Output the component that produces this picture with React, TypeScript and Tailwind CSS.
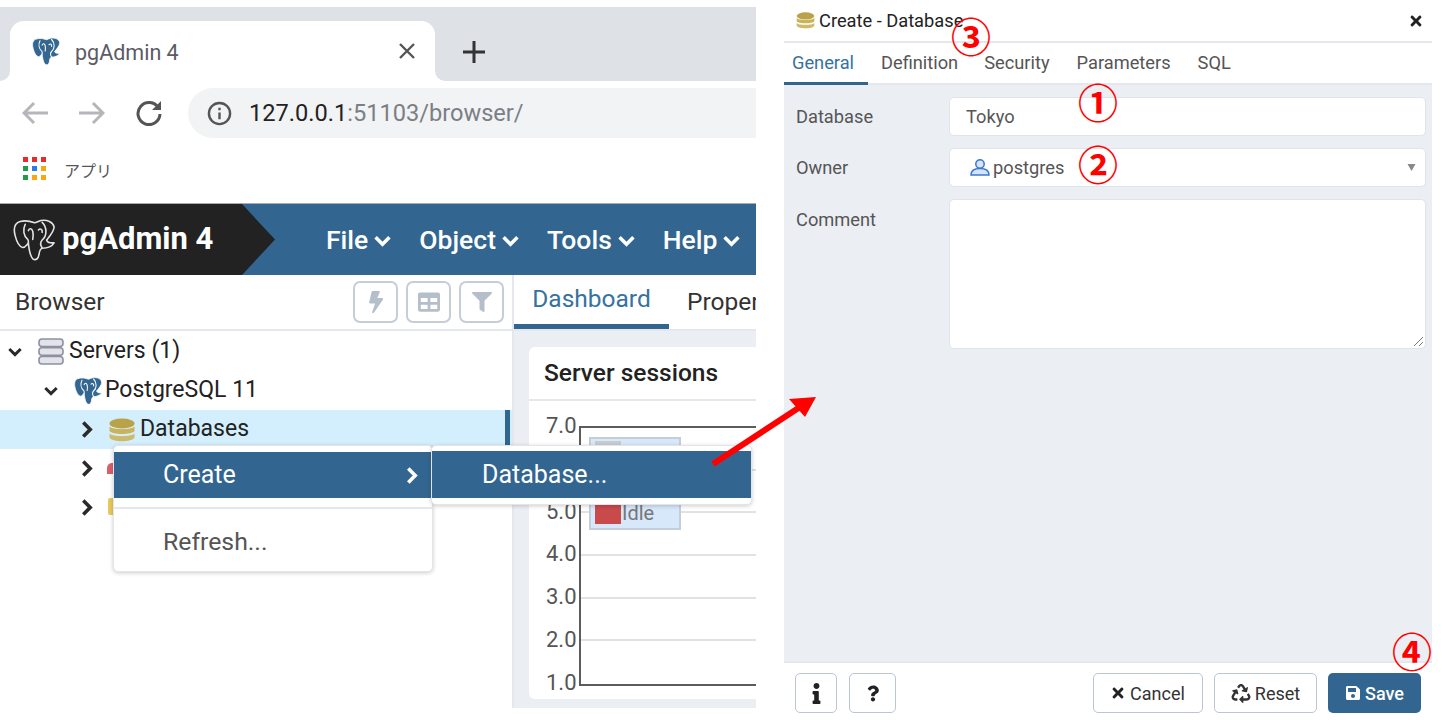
import React from "react";
import { FaBolt, FaTable, FaFilter, FaInfo, FaQuestion, FaTimes, FaRecycle, FaSave } from "react-icons/fa";

const Elephant = ({ className, outline }: { className: string; outline?: boolean }) => (
  <svg viewBox="16 24 140 136" className={className} fill="none" strokeLinejoin="round" strokeLinecap="round">
    <path
      d="M42 33C24 38 20 55 26 78C31 98 40 113 50 116C58 116 62 108 68 102C70 120 72 140 82 152C92 158 100 152 102 138C103 128 104 122 112 118C125 118 142 114 150 101C138 102 128 100 126 92C136 80 150 65 150 50C146 34 128 27 108 30C100 32 94 36 88 37C74 32 58 29 42 33Z"
      fill={outline ? "none" : "#336791"}
      stroke={outline ? "#e4e4e4" : "#ffffff"}
      strokeWidth={outline ? 5 : 3.500}
    />
    <path
      d="M58 42C50 58 52 78 66 90C70 96 68 100 68 102M112 36C128 52 128 78 112 92C106 98 106 108 112 118M68 62C72 54 78 54 82 64C84 72 84 80 82 90M100 60C106 54 114 58 112 68"
      stroke={outline ? "#e4e4e4" : "#ffffff"}
      strokeWidth={outline ? 5 : 5}
    />
  </svg>
);

const DbStack = ({ className }: { className: string }) => (
  <svg viewBox="0 0 26 24" className={className}>
    <ellipse cx="13" cy="5.500" rx="12.500" ry="5" fill="#b9a24a" />
    <path d="M.5 8.500C3 12 23 12 25.500 8.500V13C23 17 3 17 .5 13Z" fill="#c9b45c" />
    <path d="M.5 15.500C3 19 23 19 25.500 15.500V19.500C23 24.500 3 24.500 .5 19.500Z" fill="#cdbb6a" />
  </svg>
);

const Servers = () => (
  <svg viewBox="0 0 26 27" className="h-[27px] w-[26px]" fill="#e3e3ea" stroke="#8f8fa3" strokeWidth="1.600">
    <rect x="1" y="1" width="24" height="7.500" rx="3" />
    <rect x="1" y="9.800" width="24" height="7.500" rx="3" />
    <rect x="1" y="18.500" width="24" height="7.500" rx="3" />
  </svg>
);

const ChevDown = ({ className }: { className: string }) => (
  <svg viewBox="0 0 16 11" className={className} fill="none" stroke="currentColor" strokeWidth="3.400">
    <path d="M1.500 2L8 8.500L14.500 2" />
  </svg>
);

const ChevRight = ({ className }: { className: string }) => (
  <svg viewBox="0 0 11 16" className={className} fill="none" stroke="currentColor" strokeWidth="3.400">
    <path d="M2 1.500L8.500 8L2 14.500" />
  </svg>
);

const Circled = ({ children, className }: { children: string; className: string }) => (
  <span className={"absolute text-[40px] font-bold leading-none text-[#ff0000] font-['Noto_Sans_CJK_JP',sans-serif] " + className}>
    {children}
  </span>
);

const NavItem = ({ label }: { label: string }) => (
  <span className="flex items-center gap-[6px] text-[26.500px] font-medium text-white">
    {label}
    <ChevDown className="mt-[2px] h-[12px] w-[17px]" />
  </span>
);

const TreeRow = ({ indent, open, icon, label, active }: { indent: string; open?: boolean; icon?: React.ReactNode; label?: string; active?: boolean }) => (
  <div className={"relative flex h-[39px] items-center text-[23px] text-[#222] " + indent + (active ? " bg-[#d3eefc]" : "")}>
    <span className="flex w-[14px] justify-center text-[#2a2a2a]">
      {open ? <ChevDown className="h-[10px] w-[14px]" /> : <ChevRight className="h-[17px] w-[12px]" />}
    </span>
    {icon}
    {label && <span>{label}</span>}
    {active && <span className="absolute right-[2px] top-0 h-full w-[5px] bg-[#326690]" />}
  </div>
);

const ToolBtn = ({ children }: { children: React.ReactNode }) => (
  <span className="flex h-[42px] w-[45px] items-center justify-center rounded-[7px] border-2 border-[#c5ced8] text-[#b5bfca]">{children}</span>
);

const FooterBtn = ({ children, className }: { children: React.ReactNode; className: string }) => (
  <span className={"flex h-[40px] items-center justify-center rounded-[5px] border border-[#bcc6d2] bg-white text-[18px] text-[#333] " + className}>{children}</span>
);

export default function App() {
  return (
    <div className="relative flex h-[720px] w-[1453px] overflow-hidden bg-white font-['Roboto',sans-serif]">
      {/* left: browser window */}
      <div className="flex h-[708px] w-[756px] shrink-0 flex-col overflow-hidden pt-[7px]">
        <div className="flex h-[74px] shrink-0 items-end bg-[#dee1e6] pl-[10px]">
          <div className="relative flex h-[60px] w-[425px] items-center rounded-t-[14px] bg-white pl-[21px] pr-[20px]">
            <span className="absolute bottom-0 left-[-10px] h-[10px] w-[10px] bg-white">
              <span className="block h-full w-full rounded-br-[10px] bg-[#dee1e6]" />
            </span>
            <span className="absolute bottom-0 right-[-10px] h-[10px] w-[10px] bg-white">
              <span className="block h-full w-full rounded-bl-[10px] bg-[#dee1e6]" />
            </span>
            <Elephant className="h-[31px] w-[30px]" />
            <span className="ml-[14px] pt-[4px] text-[21.500px] text-[#5b5b66]">pgAdmin 4</span>
            <svg viewBox="0 0 16 16" className="ml-auto h-[16px] w-[16px]" stroke="#555" strokeWidth="2.400">
              <path d="M1 1L15 15M15 1L1 15" />
            </svg>
          </div>
          <svg viewBox="0 0 22 22" className="mb-[18px] ml-[28px] h-[22px] w-[22px]" stroke="#333" strokeWidth="3">
            <path d="M11 0V22M0 11H22" />
          </svg>
        </div>
        <div className="flex h-[69px] shrink-0 items-start pl-[22px] pt-[7px]">
          <div className="flex h-[50px] items-center">
            <svg viewBox="0 0 26 24" className="h-[24px] w-[26px]" fill="none" stroke="#b4b6b9" strokeWidth="3">
              <path d="M26 12H2M12 2L2 12L12 22" />
            </svg>
            <svg viewBox="0 0 26 24" className="ml-[31px] h-[24px] w-[26px]" fill="none" stroke="#b4b6b9" strokeWidth="3">
              <path d="M0 12H24M14 2L24 12L14 22" />
            </svg>
            <svg viewBox="0 0 26 26" className="ml-[31px] h-[26px] w-[26px]" fill="none" stroke="#555" strokeWidth="3">
              <path d="M22.500 8A11 11 0 1 0 24 14" />
              <path d="M25 1V10H16" fill="#555" strokeWidth="0" />
            </svg>
          </div>
          <div className="ml-[26px] flex h-[50px] flex-1 items-center rounded-l-full bg-[#f1f3f4] pl-[19px]">
            <svg viewBox="0 0 26 26" className="h-[25px] w-[25px]" fill="none" stroke="#555" strokeWidth="2.500">
              <circle cx="13" cy="13" r="11" />
              <path d="M13 12V19M13 7V9.500" />
            </svg>
            <span className="ml-[17px] pt-[2px] text-[23.600px] text-[#222]">
              127.0.0.1<span className="text-[#7b7f85]">:51103/browser/</span>
            </span>
          </div>
        </div>
        <div className="flex h-[53px] shrink-0 items-start pl-[23px] pt-[7px]">
          <div className="grid h-[23px] w-[23px] grid-cols-3 gap-[4px]">
            <i className="bg-[#ea2a2a]" /><i className="bg-[#ea2a2a]" /><i className="bg-[#ea2a2a]" />
            <i className="bg-[#1f9d4d]" /><i className="bg-[#2a7de8]" /><i className="bg-[#f5a80f]" />
            <i className="bg-[#1f9d4d]" /><i className="bg-[#f5a80f]" /><i className="bg-[#f5a80f]" />
          </div>
          <span className="ml-[18px] text-[16px] text-[#555] font-['Noto_Sans_CJK_JP',sans-serif] leading-[26px]">アプリ</span>
        </div>
        <div className="relative flex h-[72px] shrink-0 items-center border-t border-[#aaa] bg-[#326690]">
          <div className="flex h-full w-[276px] items-center bg-[#222222] pl-[12px] [clip-path:polygon(0_0,242px_0,275px_50%,242px_100%,0_100%)]">
            <Elephant className="h-[44px] w-[44px]" outline />
            <span className="ml-[6px] text-[31px] font-bold text-white">pgAdmin 4</span>
          </div>
          <div className="ml-[50px] flex gap-[28px]">
            <NavItem label="File" />
            <NavItem label="Object" />
            <NavItem label="Tools" />
            <NavItem label="Help" />
          </div>
        </div>
        <div className="flex min-h-0 flex-1">
          <div className="w-[514px] shrink-0 border-r-2 border-[#e4e8ee]">
            <div className="flex h-[56px] items-center border-b-2 border-[#e4e8ee] pl-[15px] pr-[8px]">
              <span className="text-[24.500px] text-[#333]">Browser</span>
              <div className="ml-auto flex gap-[8px]">
                <ToolBtn><FaBolt className="h-[22px] w-[14px] -skew-x-6" /></ToolBtn>
                <ToolBtn><FaTable className="h-[22px] w-[24px]" /></ToolBtn>
                <ToolBtn><FaFilter className="h-[20px] w-[20px]" /></ToolBtn>
              </div>
            </div>
            <div className="pt-[1px]">
              <TreeRow indent="pl-[8px]" open icon={<span className="ml-[16px] mr-[5px] flex"><Servers /></span>} label="Servers (1)" />
              <TreeRow indent="pl-[44px]" open icon={<span className="ml-[15px] mr-[2px] flex"><Elephant className="h-[30px] w-[30px]" /></span>} label="PostgreSQL 11" />
              <TreeRow indent="pl-[80px]" active icon={<span className="ml-[15px] mr-[5px] flex"><DbStack className="h-[24px] w-[26px]" /></span>} label="Databases" />
              <TreeRow indent="pl-[80px]" icon={<span className="ml-[13px] mt-[-1px] h-[11px] w-[7px] rounded-tl-[5px] bg-[#d9606a]" />} />
              <TreeRow indent="pl-[80px]" icon={<span className="ml-[14px] mt-[-3px] h-[17px] w-[6px] rounded-l-[2px] bg-[#e8c95c]" />} />
            </div>
          </div>
          <div className="flex min-w-0 flex-1 flex-col bg-[#ebeff4]">
            <div className="flex h-[56px] shrink-0 items-stretch overflow-hidden border-b-2 border-[#e4e8ee] bg-white text-[24.500px]">
              <span className="flex w-[155px] shrink-0 items-center justify-center border-b-[5px] border-[#326690] text-[#36729f]">Dashboard</span>
              <span className="ml-[18px] flex items-center text-[#333]">Proper</span>
            </div>
            <div className="flex-1 overflow-hidden pl-[15px] pt-[16px]">
              <div className="h-[352px] w-[400px] rounded-[6px] bg-white">
                <div className="flex h-[54px] items-center border-b-2 border-[#e4e8ee] pl-[15px] text-[24.500px] font-medium text-[#222]">Server sessions</div>
                <div className="relative flex h-[298px] pl-[17px] pt-[13px] text-[22px] leading-[23px] text-[#555]">
                  <div className="flex h-[280px] w-[33px] flex-col justify-between">
                    <span>7.0</span><span className="invisible">6.0</span><span>5.0</span><span>4.0</span><span>3.0</span><span>2.0</span><span>1.0</span>
                  </div>
                  <div className="mt-[12px] flex h-[260px] flex-1 flex-col border-2 border-[#5c5c5c]">
                    <div className="h-[42.700px] border-b-2 border-[#e2e2e2]" />
                    <div className="h-[42.700px] border-b-2 border-[#e2e2e2]" />
                    <div className="h-[42.700px] border-b-2 border-[#e2e2e2]" />
                    <div className="h-[42.700px] border-b-2 border-[#e2e2e2]" />
                    <div className="h-[42.700px] border-b-2 border-[#e2e2e2]" />
                  </div>
                  <div className="absolute left-[60px] top-[36px] flex h-[93px] w-[92px] flex-col justify-between border-2 border-[#c4ced8] bg-[#d6e8fa] pb-[3px] pl-[4px] pt-[2px] text-[20px]">
                    <span className="h-[20px] w-[26px] bg-[#c8ccd0]" />
                    <span className="flex items-center">
                      <i className="h-[20px] w-[26px] bg-[#c94a4a]" />
                      <span className="ml-[1px] text-[#777]">Idle</span>
                    </span>
                  </div>
                </div>
              </div>
            </div>
          </div>
        </div>
      </div>

      {/* context menu */}
      <div className="absolute left-[113px] top-[445px] h-[127px] w-[320px] rounded-[5px] border border-[#e2e6ec] bg-white pt-[6px] shadow-[0_1px_4px_rgba(0,0,0,0.2)]">
        <div className="flex h-[46px] items-center justify-between bg-[#326690] pl-[49px] pr-[14px] text-[25px] text-white">
          Create
          <ChevRight className="h-[17px] w-[12px]" />
        </div>
        <div className="mt-[9px] border-t-2 border-[#e4e8ee]" />
        <div className="pl-[49px] pt-[14px] text-[24.800px] text-[#555]">Refresh...</div>
      </div>
      <div className="absolute left-[431px] top-[445px] h-[60px] w-[321px] rounded-[5px] border border-[#e2e6ec] bg-white pt-[5px] shadow-[0_1px_4px_rgba(0,0,0,0.2)]">
        <div className="flex h-[47px] items-center bg-[#326690] pl-[50px] text-[25px] text-white">Database...</div>
      </div>

      {/* red arrow */}
      <svg viewBox="0 0 110 75" className="absolute left-[710px] top-[394px] h-[75px] w-[110px]">
        <path d="M3 70L90 13" stroke="#ff0000" strokeWidth="6" />
        <path d="M106 3L79 5L95 23Z" fill="#ff0000" />
      </svg>

      {/* dialog */}
      <div className="ml-[28px] flex h-[720px] w-[648px] shrink-0 flex-col">
        <div className="flex h-[43px] shrink-0 items-center border-b-2 border-[#e4e8ee] pl-[12px] pr-[9px] text-[18.250px] text-[#222]">
          <DbStack className="h-[17px] w-[19px]" />
          <span className="ml-[4px]">Create - Database</span>
          <FaTimes className="ml-auto h-[16px] w-[14px] text-[#222]" />
        </div>
        <div className="flex h-[42px] shrink-0 items-stretch border-b-2 border-[#e4e8ee] text-[18.250px] text-[#555]">
          <span className="mb-[-2px] flex w-[84px] items-center border-b-[3px] border-[#326690] pl-[8px] text-[#36729f]">General</span>
          <span className="ml-[13px] flex items-center">Definition</span>
          <span className="ml-[26px] flex items-center">Security</span>
          <span className="ml-[27px] flex items-center">Parameters</span>
          <span className="ml-[27px] flex items-center">SQL</span>
        </div>
        <div className="flex flex-1 flex-col gap-[12px] bg-[#ebeff4] pl-[12px] pr-[6px] pt-[12px] text-[18.250px] text-[#555]">
          <div className="flex items-center">
            <span className="w-[153px]">Database</span>
            <div className="flex h-[39px] flex-1 items-center rounded-[5px] border border-[#dfe4ea] bg-white pl-[16px]">Tokyo</div>
          </div>
          <div className="flex items-center">
            <span className="w-[153px]">Owner</span>
            <div className="flex h-[39px] flex-1 items-center rounded-[5px] border border-[#dfe4ea] bg-white pl-[20px] pr-[9px]">
              <svg viewBox="0 0 20 17" className="h-[17px] w-[20px]" fill="#d5e4f7" stroke="#3b78d0" strokeWidth="1.500">
                <circle cx="10" cy="5" r="4.200" />
                <path d="M1 16C1 11 5 9.500 10 9.500S19 11 19 16Z" />
              </svg>
              <span className="ml-[3px]">postgres</span>
              <svg viewBox="0 0 8 7" className="ml-auto h-[7px] w-[9px]" fill="#888">
                <path d="M0 0H8L4 7Z" />
              </svg>
            </div>
          </div>
          <div className="flex items-start">
            <span className="w-[153px] pt-[7px]">Comment</span>
            <div className="relative h-[150px] flex-1 rounded-[5px] border border-[#dfe4ea] bg-white">
              <svg viewBox="0 0 10 10" className="absolute bottom-[2px] right-[2px] h-[10px] w-[10px]" stroke="#777" strokeWidth="1">
                <path d="M1 10L10 1M6 10L10 6" />
              </svg>
            </div>
          </div>
        </div>
        <div className="flex h-[59px] shrink-0 items-start border-t-2 border-[#e4e8ee] pl-[11px] pr-[11px] pt-[10px]">
          <FooterBtn className="w-[42px]"><FaInfo className="h-[21px] w-[11px] text-[#222]" /></FooterBtn>
          <FooterBtn className="ml-[12px] w-[47px]"><FaQuestion className="h-[19px] w-[12px] text-[#222]" /></FooterBtn>
          <FooterBtn className="ml-auto w-[110px] gap-[5px]"><FaTimes className="h-[16px] w-[14px] text-[#222]" />Cancel</FooterBtn>
          <FooterBtn className="ml-[11px] w-[103px] gap-[4px]"><FaRecycle className="h-[19px] w-[20px] text-[#333]" />Reset</FooterBtn>
          <span className="ml-[11px] flex h-[40px] w-[93px] items-center justify-center gap-[4px] rounded-[5px] bg-[#326690] text-[18px] font-medium text-white">
            <FaSave className="h-[16px] w-[16px]" />Save
          </span>
        </div>
      </div>

      <Circled className="left-[1078px] top-[81px]">①</Circled>
      <Circled className="left-[1078px] top-[143px]">②</Circled>
      <Circled className="left-[951px] top-[15px]">③</Circled>
      <Circled className="left-[1392px] top-[630px]">④</Circled>
    </div>
  );
}
